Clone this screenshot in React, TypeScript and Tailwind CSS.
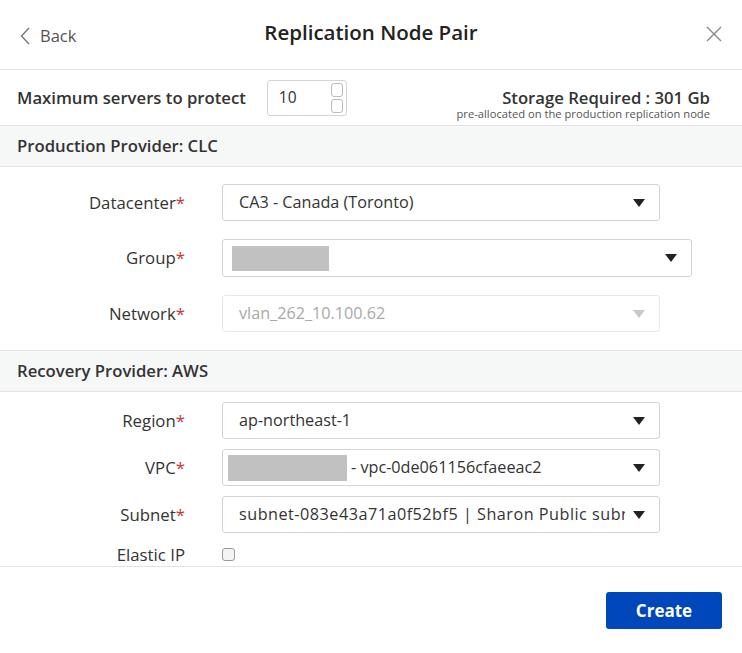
import React from "react";

function Caret({ disabled }: { disabled?: boolean }) {
  return (
    <svg width="12" height="8" viewBox="0 0 12 8" className="shrink-0">
      <path d="M0 0 L12 0 L6 8 Z" fill={disabled ? "#c8c8c8" : "#222"} />
    </svg>
  );
}

function Field({
  label,
  required = true,
  children,
  className = "",
}: {
  label: string;
  required?: boolean;
  children: React.ReactNode;
  className?: string;
}) {
  return (
    <div className={`flex items-center ${className}`}>
      <div className="w-[185px] shrink-0 text-right text-[16.8px] text-[#333]">
        {label}
        {required && <span className="text-[#d0352f]">*</span>}
      </div>
      <div className="ml-[37px] flex-1">{children}</div>
    </div>
  );
}

function Select({
  children,
  wide,
  disabled,
  tall,
  pad = "pl-4",
}: {
  children: React.ReactNode;
  wide?: boolean;
  disabled?: boolean;
  tall?: boolean;
  pad?: string;
}) {
  return (
    <div
      className={`flex items-center justify-between rounded-[3px] border pr-[14px] text-[16.2px] ${pad} ${
        wide ? "w-[470px]" : "w-[438px]"
      } ${tall ? "h-[38px]" : "h-[37px]"} ${
        disabled ? "border-[#e8e8e8] text-[#a9a9a9]" : "border-[#d4d4d4] text-[#333]"
      }`}
    >
      <div className="mr-[8px] flex min-w-0 flex-1 items-center overflow-hidden whitespace-nowrap">{children}</div>
      <Caret disabled={disabled} />
    </div>
  );
}

function SectionHeader({ title }: { title: string }) {
  return (
    <div className="flex h-[42px] items-center border-y border-[#e3e3e3] bg-[#f6f7f7] px-[17px] text-[16.7px] font-semibold text-[#333]">
      {title}
    </div>
  );
}

export default function App() {
  return (
    <div
      className="h-[653px] w-[742px] bg-white"
      style={{ fontFamily: '"Open Sans", "Liberation Sans", sans-serif' }}
    >
      {/* header */}
      <div className="relative flex h-[70px] items-center justify-center border-b border-[#e3e3e3]">
        <div className="absolute left-[20px] top-[24px] flex items-center gap-[10px] text-[16.5px] text-[#555]">
          <svg width="10" height="18" viewBox="0 0 10 18">
            <path d="M9 1 L1.5 9 L9 17" fill="none" stroke="#777" strokeWidth="1.4" />
          </svg>
          Back
        </div>
        <div className="mt-[-4px] text-[20.5px] font-semibold text-[#222]">Replication Node Pair</div>
        <svg className="absolute right-[20px] top-[26px]" width="16" height="16" viewBox="0 0 16 16">
          <path d="M1 1 L15 15 M15 1 L1 15" stroke="#888" strokeWidth="1.4" />
        </svg>
      </div>

      {/* max servers */}
      <div className="flex h-[55px] items-center px-[17px]">
        <div className="text-[16.7px] font-semibold text-[#333]">Maximum servers to protect</div>
        <div className="ml-[21px] flex h-[36px] w-[80px] items-center justify-between rounded-[3px] border border-[#d4d4d4] pl-[11px] pr-[3px] text-[15.5px] text-[#333]">
          10
          <div className="flex flex-col gap-[2px]">
            <div className="h-[14px] w-[12px] rounded-[3px] border border-[#bbb]" />
            <div className="h-[14px] w-[12px] rounded-[3px] border border-[#bbb]" />
          </div>
        </div>
        <div className="ml-auto mr-[15px] mt-[12px] flex flex-col items-end">
          <div className="text-[16.7px] font-semibold leading-[20px] text-[#333]">Storage Required : 301 Gb</div>
          <div className="text-[11.2px] leading-[12px] text-[#555]">
            pre-allocated on the production replication node
          </div>
        </div>
      </div>

      <SectionHeader title="Production Provider: CLC" />
      <div className="flex flex-col gap-[18px] pb-[18px] pt-[17px]">
        <Field label="Datacenter">
          <Select>CA3 - Canada (Toronto)</Select>
        </Field>
        <Field label="Group">
          <Select wide tall pad="pl-[9px]">
            <div className="h-[25px] w-[97px] bg-[#c1c1c1]" />
          </Select>
        </Field>
        <Field label="Network">
          <Select disabled>vlan_262_10.100.62</Select>
        </Field>
      </div>

      <SectionHeader title="Recovery Provider: AWS" />
      <div className="flex flex-col gap-[10px] pt-[10px]">
        <Field label="Region">
          <Select>ap-northeast-1</Select>
        </Field>
        <Field label="VPC">
          <Select pad="pl-[5px]">
            <div className="mr-[4px] h-[26px] w-[119px] shrink-0 bg-[#c1c1c1]" />- vpc-0de061156cfaeeac2
          </Select>
        </Field>
        <Field label="Subnet">
          <Select>
            <span className="tracking-[0.5px]">subnet-083e43a71a0f52bf5 | Sharon Public subnet</span>
          </Select>
        </Field>
        <Field label="Elastic IP" required={false} className="h-[23px]">
          <div className="h-[13px] w-[13px] rounded-[3px] border border-[#999] bg-[#f4f4f4]" />
        </Field>
      </div>

      {/* footer */}
      <div className="flex h-[86px] items-start justify-end border-t border-[#e3e3e3] pr-[20px] pt-[25px]">
        <button className="h-[37px] w-[116px] rounded-[3px] bg-[#0047bb] text-[17px] font-bold text-white">
          Create
        </button>
      </div>
    </div>
  );
}
